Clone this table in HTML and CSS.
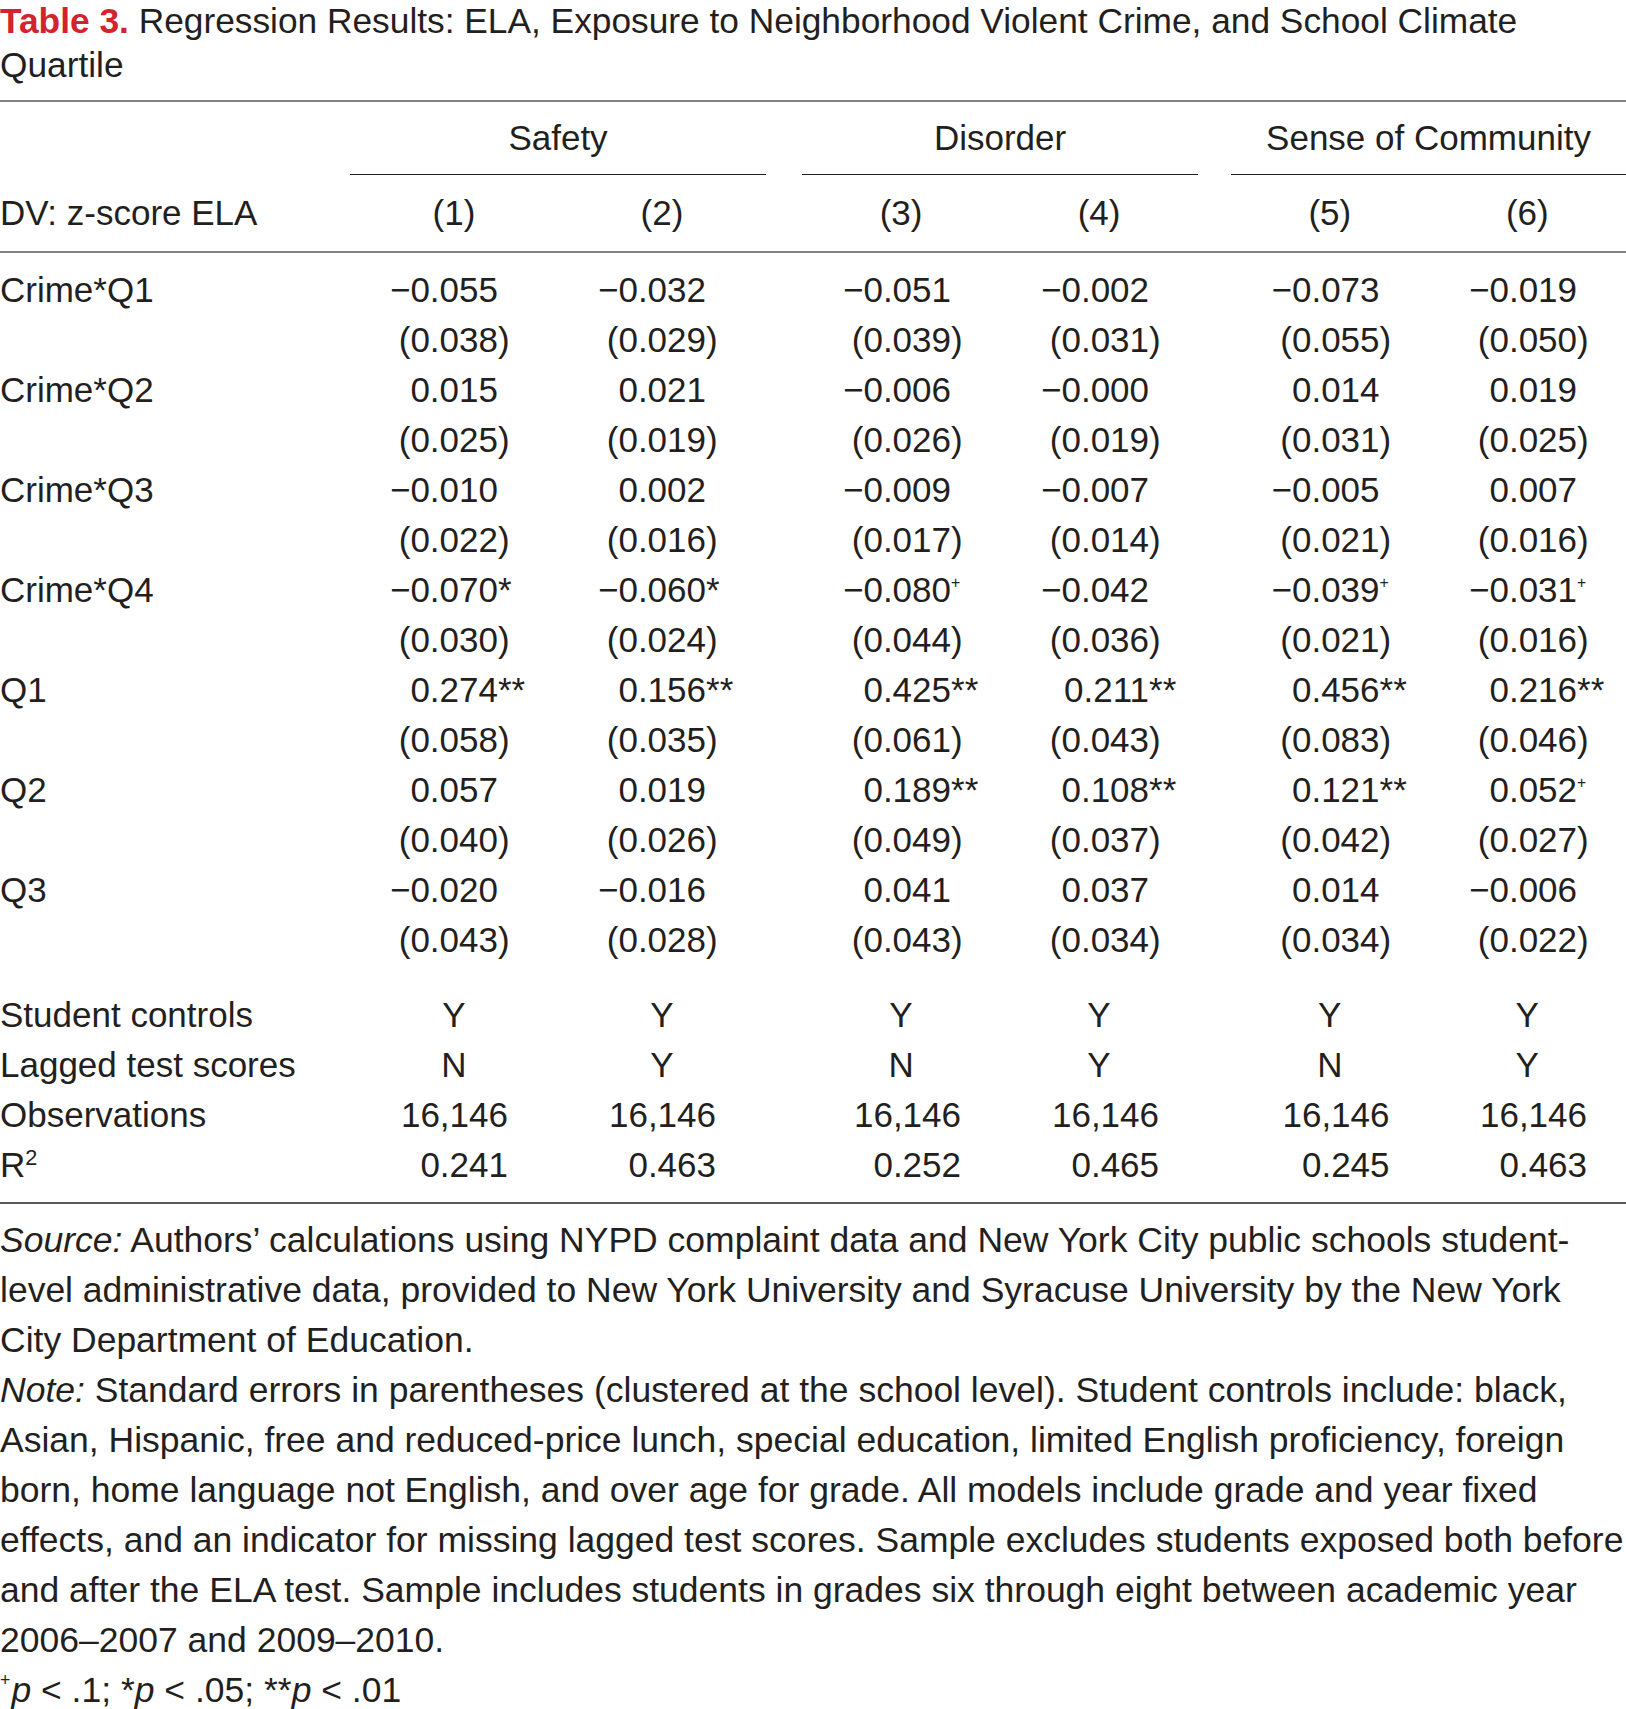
FILE: index.html
```html
<!DOCTYPE html>
<html lang="en">
<head>
<meta charset="utf-8">
<title>Table 3</title>
<link rel="stylesheet" href="styles.css">
</head>
<body>
<div class="page">
  <h1 class="title"><span class="tlabel">Table 3.</span> Regression Results: ELA, Exposure to Neighborhood Violent Crime, and School Climate<br>Quartile</h1>
  <table class="reg">
    <colgroup>
      <col class="c-label"><col class="c-a"><col class="c-a"><col class="c-gap1"><col class="c-b"><col class="c-b"><col class="c-gap2"><col class="c-c"><col class="c-c">
    </colgroup>
    <thead>
      <tr class="groups">
        <th></th><th colspan="2" class="grp">Safety</th><th></th><th colspan="2" class="grp">Disorder</th><th></th><th colspan="2" class="grp">Sense of Community</th>
      </tr>
      <tr class="models">
        <th class="lbl">DV: z-score ELA</th><th>(1)</th><th>(2)</th><th></th><th>(3)</th><th>(4)</th><th></th><th>(5)</th><th>(6)</th>
      </tr>
    </thead>
    <tbody class="coef">
      <tr><td class="lbl">Crime*Q1</td><td>−0.055</td><td>−0.032</td><td></td><td>−0.051</td><td>−0.002</td><td></td><td>−0.073</td><td>−0.019</td></tr>
      <tr><td class="lbl"></td><td>(0.038<span class="h">)</span></td><td>(0.029<span class="h">)</span></td><td></td><td>(0.039<span class="h">)</span></td><td>(0.031<span class="h">)</span></td><td></td><td>(0.055<span class="h">)</span></td><td>(0.050<span class="h">)</span></td></tr>
      <tr><td class="lbl">Crime*Q2</td><td>0.015</td><td>0.021</td><td></td><td>−0.006</td><td>−0.000</td><td></td><td>0.014</td><td>0.019</td></tr>
      <tr><td class="lbl"></td><td>(0.025<span class="h">)</span></td><td>(0.019<span class="h">)</span></td><td></td><td>(0.026<span class="h">)</span></td><td>(0.019<span class="h">)</span></td><td></td><td>(0.031<span class="h">)</span></td><td>(0.025<span class="h">)</span></td></tr>
      <tr><td class="lbl">Crime*Q3</td><td>−0.010</td><td>0.002</td><td></td><td>−0.009</td><td>−0.007</td><td></td><td>−0.005</td><td>0.007</td></tr>
      <tr><td class="lbl"></td><td>(0.022<span class="h">)</span></td><td>(0.016<span class="h">)</span></td><td></td><td>(0.017<span class="h">)</span></td><td>(0.014<span class="h">)</span></td><td></td><td>(0.021<span class="h">)</span></td><td>(0.016<span class="h">)</span></td></tr>
      <tr><td class="lbl">Crime*Q4</td><td>−0.070<span class="h">*</span></td><td>−0.060<span class="h">*</span></td><td></td><td>−0.080<span class="h"><span class="plus">+</span></span></td><td>−0.042</td><td></td><td>−0.039<span class="h"><span class="plus">+</span></span></td><td>−0.031<span class="h"><span class="plus">+</span></span></td></tr>
      <tr><td class="lbl"></td><td>(0.030<span class="h">)</span></td><td>(0.024<span class="h">)</span></td><td></td><td>(0.044<span class="h">)</span></td><td>(0.036<span class="h">)</span></td><td></td><td>(0.021<span class="h">)</span></td><td>(0.016<span class="h">)</span></td></tr>
      <tr><td class="lbl">Q1</td><td>0.274<span class="h">**</span></td><td>0.156<span class="h">**</span></td><td></td><td>0.425<span class="h">**</span></td><td>0.211<span class="h">**</span></td><td></td><td>0.456<span class="h">**</span></td><td>0.216<span class="h">**</span></td></tr>
      <tr><td class="lbl"></td><td>(0.058<span class="h">)</span></td><td>(0.035<span class="h">)</span></td><td></td><td>(0.061<span class="h">)</span></td><td>(0.043<span class="h">)</span></td><td></td><td>(0.083<span class="h">)</span></td><td>(0.046<span class="h">)</span></td></tr>
      <tr><td class="lbl">Q2</td><td>0.057</td><td>0.019</td><td></td><td>0.189<span class="h">**</span></td><td>0.108<span class="h">**</span></td><td></td><td>0.121<span class="h">**</span></td><td>0.052<span class="h"><span class="plus">+</span></span></td></tr>
      <tr><td class="lbl"></td><td>(0.040<span class="h">)</span></td><td>(0.026<span class="h">)</span></td><td></td><td>(0.049<span class="h">)</span></td><td>(0.037<span class="h">)</span></td><td></td><td>(0.042<span class="h">)</span></td><td>(0.027<span class="h">)</span></td></tr>
      <tr><td class="lbl">Q3</td><td>−0.020</td><td>−0.016</td><td></td><td>0.041</td><td>0.037</td><td></td><td>0.014</td><td>−0.006</td></tr>
      <tr><td class="lbl"></td><td>(0.043<span class="h">)</span></td><td>(0.028<span class="h">)</span></td><td></td><td>(0.043<span class="h">)</span></td><td>(0.034<span class="h">)</span></td><td></td><td>(0.034<span class="h">)</span></td><td>(0.022<span class="h">)</span></td></tr>
    </tbody>
    <tbody class="stats">
      <tr class="yn"><td class="lbl">Student controls</td><td>Y</td><td>Y</td><td></td><td>Y</td><td>Y</td><td></td><td>Y</td><td>Y</td></tr>
      <tr class="yn"><td class="lbl">Lagged test scores</td><td>N</td><td>Y</td><td></td><td>N</td><td>Y</td><td></td><td>N</td><td>Y</td></tr>
      <tr class="flush"><td class="lbl">Observations</td><td>16,146</td><td>16,146</td><td></td><td>16,146</td><td>16,146</td><td></td><td>16,146</td><td>16,146</td></tr>
      <tr class="flush"><td class="lbl">R<sup class="sq">2</sup></td><td>0.241</td><td>0.463</td><td></td><td>0.252</td><td>0.465</td><td></td><td>0.245</td><td>0.463</td></tr>
    </tbody>
  </table>
  <div class="notes">
    <p><i>Source:</i> Authors’ calculations using NYPD complaint data and New York City public schools student-<br>level administrative data, provided to New York University and Syracuse University by the New York<br>City Department of Education.</p>
    <p><i>Note:</i> Standard errors in parentheses (clustered at the school level). Student controls include: black,<br>Asian, Hispanic, free and reduced-price lunch, special education, limited English proficiency, foreign<br>born, home language not English, and over age for grade. All models include grade and year fixed<br>effects, and an indicator for missing lagged test scores. Sample excludes students exposed both before<br>and after the ELA test. Sample includes students in grades six through eight between academic year<br>2006–2007 and 2009–2010.</p>
    <p><span class="plus fn">+</span><i>p</i> &lt; .1; *<i>p</i> &lt; .05; **<i>p</i> &lt; .01</p>
  </div>
</div>
</body>
</html>
```

FILE: styles.css
```css
html, body {
  margin: 0;
  padding: 0;
  background: #ffffff;
}

body {
  font-family: "Liberation Sans", Arial, sans-serif;
  font-size: 35px;
  color: #231f20;
}

.page {
  width: 1626px;
  overflow: hidden;
}

.title {
  margin: -1px 0 13px 0;
  font-size: 35.3px;
  font-weight: normal;
  line-height: 44px;
  white-space: nowrap;
}

.tlabel {
  color: #d3232e;
  font-weight: bold;
}

.reg {
  width: 1626px;
  table-layout: fixed;
  border-collapse: collapse;
  border-top: 2px solid #808285;
}

.c-label { width: 350px; }
.c-a { width: 208px; }
.c-gap1 { width: 36px; }
.c-b { width: 198px; }
.c-gap2 { width: 33px; }
.c-c { width: 197.5px; }

.reg th,
.reg td {
  padding: 0;
  font-weight: normal;
  white-space: nowrap;
  line-height: 50px;
}

.groups th {
  height: 72px;
  vertical-align: middle;
  text-align: center;
}

.groups th.grp {
  border-bottom: 1.5px solid #231f20;
}

.models th {
  height: 76px;
  text-align: center;
  vertical-align: middle;
  border-bottom: 2px solid #808285;
}

.reg .lbl {
  text-align: left;
}

.reg td {
  height: 50px;
  text-align: right;
  padding-right: var(--pr, 0px);
}

.reg td:nth-child(2),
.reg td:nth-child(3) { --pr: 60px; }

.reg td:nth-child(5),
.reg td:nth-child(6),
.reg td:nth-child(8),
.reg td:nth-child(9) { --pr: 49px; }

.reg td.lbl {
  padding-right: 0;
  text-align: left;
}

.coef tr:first-child td {
  padding-top: 12px;
}

.stats tr:first-child td {
  padding-top: 25px;
}

.stats tr:last-child td {
  padding-bottom: 12px;
  border-bottom: 2px solid #58595b;
}

.stats tr.yn td:not(.lbl) {
  text-align: center;
  padding-right: 0;
}

.stats tr.flush td:not(.lbl) {
  padding-right: calc(var(--pr, 0px) - 10px);
}

.h {
  display: inline-block;
  width: 0;
  text-align: left;
  white-space: nowrap;
}

.plus {
  font-size: 0.45em;
  vertical-align: 0.9em;
  line-height: 0;
}

.plus.fn {
  font-size: 0.5em;
  margin-right: 1px;
}

.sq {
  font-size: 0.62em;
  vertical-align: 0.55em;
  line-height: 0;
}

.notes {
  margin-top: 11px;
  font-size: 35.5px;
  line-height: 50px;
  white-space: nowrap;
}

.notes p {
  margin: 0;
}
```
